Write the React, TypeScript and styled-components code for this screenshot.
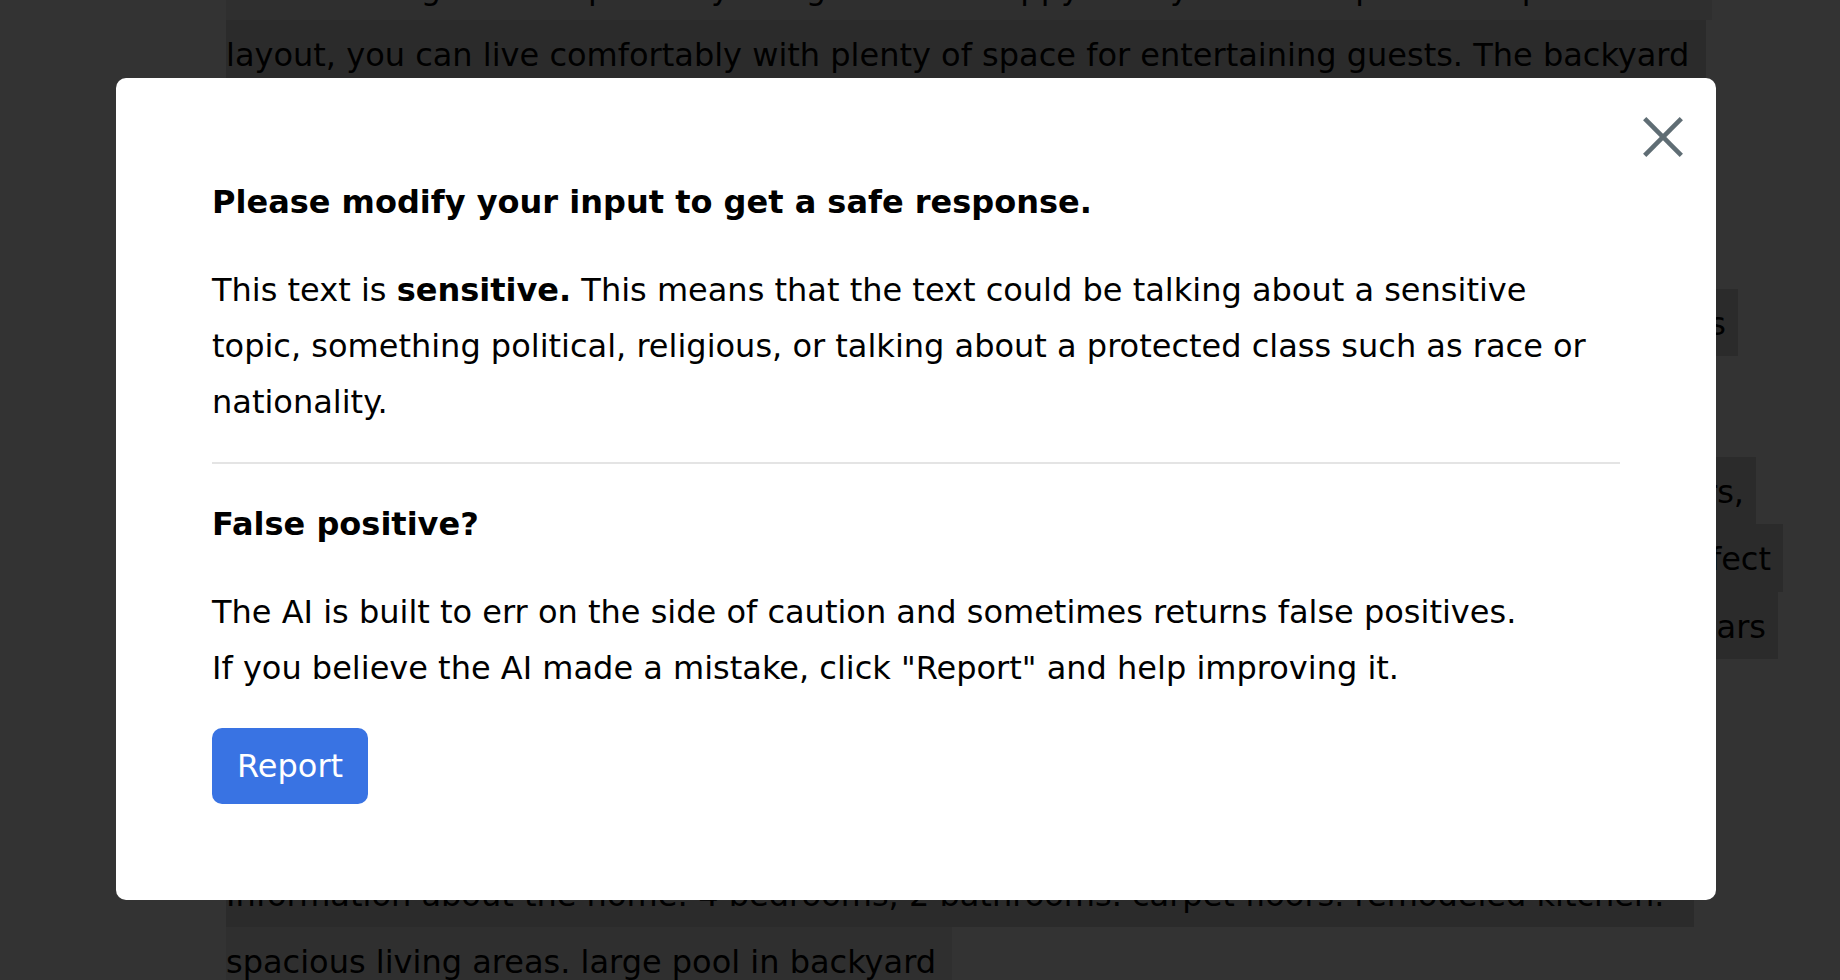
import React from "react";
import styled, { createGlobalStyle } from "styled-components";

const GlobalStyle = createGlobalStyle`
  html, body {
    margin: 0;
    padding: 0;
    background: #ffffff;
  }
  body {
    font-family: "DejaVu Sans", Verdana, sans-serif;
    overflow: hidden;
  }
  * { box-sizing: border-box; }
`;

/* ---------- background document ---------- */

const Page = styled.main`
  height: 980px;
  overflow: hidden;
  padding-left: 226px;
`;

const Doc = styled.article`
  margin-top: -47.2px;
  font-size: 32px;
  line-height: 67.2px;
  color: #000;
`;

const Para = styled.div`
  & + & {
    margin-top: 34px;
  }
`;

type Tone = "strong" | "soft";

const Line = styled.div<{ $width: number; $tone: Tone; $end?: boolean }>`
  width: ${(p) => p.$width}px;
  height: 67.2px;
  padding-top: 2px;
  white-space: nowrap;
  overflow: hidden;
  background: ${(p) => (p.$tone === "strong" ? "#d6d6d6" : "#e8e8e8")};
  display: flex;
  justify-content: ${(p) => (p.$end ? "flex-end" : "flex-start")};
  padding-right: ${(p) => (p.$end ? "12px" : "0")};
`;

/* ---------- modal ---------- */

const Overlay = styled.div`
  position: fixed;
  inset: 0;
  background: rgba(0, 0, 0, 0.8);
  display: flex;
  align-items: center;
  justify-content: center;
  padding: 0 8px 2px 0;
`;

const Modal = styled.section`
  position: relative;
  width: 1600px;
  padding: 96px;
  background: #ffffff;
  border-radius: 10px;
  color: #000;
  font-family: "DejaVu Sans", Verdana, sans-serif;
`;

const CloseButton = styled.button`
  position: absolute;
  top: 39px;
  right: 33px;
  width: 40px;
  height: 40px;
  padding: 0;
  border: none;
  background: none;
  cursor: pointer;
  display: flex;
`;

const Heading = styled.h2`
  margin: 0;
  font-size: 32px;
  line-height: 56px;
  font-weight: 700;
`;

const Text = styled.p`
  margin: 32px 0 0;
  font-size: 32px;
  line-height: 56px;
  font-weight: 400;
`;

const Divider = styled.hr`
  margin: 32px 0;
  height: 2px;
  border: none;
  background: #e4e4e4;
`;

const ReportButton = styled.button`
  margin-top: 32px;
  height: 76px;
  padding: 0 25px;
  border: none;
  border-radius: 10px;
  background: #3973e3;
  color: #ffffff;
  font-family: "DejaVu Sans", Verdana, sans-serif;
  font-size: 32px;
  line-height: 76px;
  cursor: pointer;
`;

const CloseIcon = () => (
  <svg width="40" height="40" viewBox="0 0 40 40" aria-hidden="true">
    <g stroke="#5f6d74" strokeWidth="4.6" strokeLinecap="butt">
      <line x1="1.7" y1="1.7" x2="38.3" y2="38.3" />
      <line x1="38.3" y1="1.7" x2="1.7" y2="38.3" />
    </g>
  </svg>
);

const paragraphs: { text: string; width: number; tone: Tone; end?: boolean }[][] = [
  [
    { text: "This stunning home is perfectly designed for a happy family. With its open-concept", width: 1486, tone: "soft" },
    { text: "layout, you can live comfortably with plenty of space for entertaining guests. The backyard", width: 1480, tone: "strong" },
    { text: "is a private oasis with a sparkling pool, lush landscaping, and a covered patio that is", width: 1460, tone: "strong" },
    { text: "ideal for summer barbecues. The kitchen has been fully remodeled with granite counters", width: 1450, tone: "strong" },
    { text: "and stainless steel appliances. Located in a quiet neighborhood close to parks and", width: 1440, tone: "strong" },
    { text: "top-rated schools, shopping centers, restaurants, and major highways", width: 1512, tone: "strong", end: true },
    { text: "for an easy commute to work.", width: 560, tone: "strong" },
  ],
  [
    { text: "The home features four generously sized bedrooms, two updated bathrooms, new carpet floors,", width: 1530, tone: "strong", end: true },
    { text: "and a bright living room with large windows that let in natural light. It is the perfect", width: 1557, tone: "strong", end: true },
    { text: "place to call home for growing families, and it has been lovingly maintained for many years", width: 1552, tone: "strong", end: true },
    { text: "by its owners. Schedule a showing today and see everything this property has to offer.", width: 1450, tone: "strong" },
    { text: "Do not miss the chance to make this beautiful house your new home.", width: 1180, tone: "strong" },
    { text: "Contact us for more details.", width: 540, tone: "strong" },
    { text: "Information about the home: 4 bedrooms, 2 bathrooms. carpet floors. remodeled kitchen.", width: 1468, tone: "strong" },
    { text: "spacious living areas. large pool in backyard", width: 726, tone: "soft" },
  ],
];

export default function App() {
  return (
    <>
      <GlobalStyle />
      <Page>
        <Doc>
          {paragraphs.map((lines, i) => (
            <Para key={i}>
              {lines.map((l, j) => (
                <Line key={j} $width={l.width} $tone={l.tone} $end={l.end}>
                  {l.text}
                </Line>
              ))}
            </Para>
          ))}
        </Doc>
      </Page>
      <Overlay>
        <Modal role="dialog" aria-modal="true">
          <CloseButton aria-label="Close">
            <CloseIcon />
          </CloseButton>
          <Heading>Please modify your input to get a safe response.</Heading>
          <Text>
            This text is <strong>sensitive.</strong> This means that the text could be talking about a sensitive
            <br />
            topic, something political, religious, or talking about a protected class such as race or
            <br />
            nationality.
          </Text>
          <Divider />
          <Heading as="h3">False positive?</Heading>
          <Text>
            The AI is built to err on the side of caution and sometimes returns false positives.
            <br />
            If you believe the AI made a mistake, click "Report" and help improving it.
          </Text>
          <ReportButton>Report</ReportButton>
        </Modal>
      </Overlay>
    </>
  );
}
